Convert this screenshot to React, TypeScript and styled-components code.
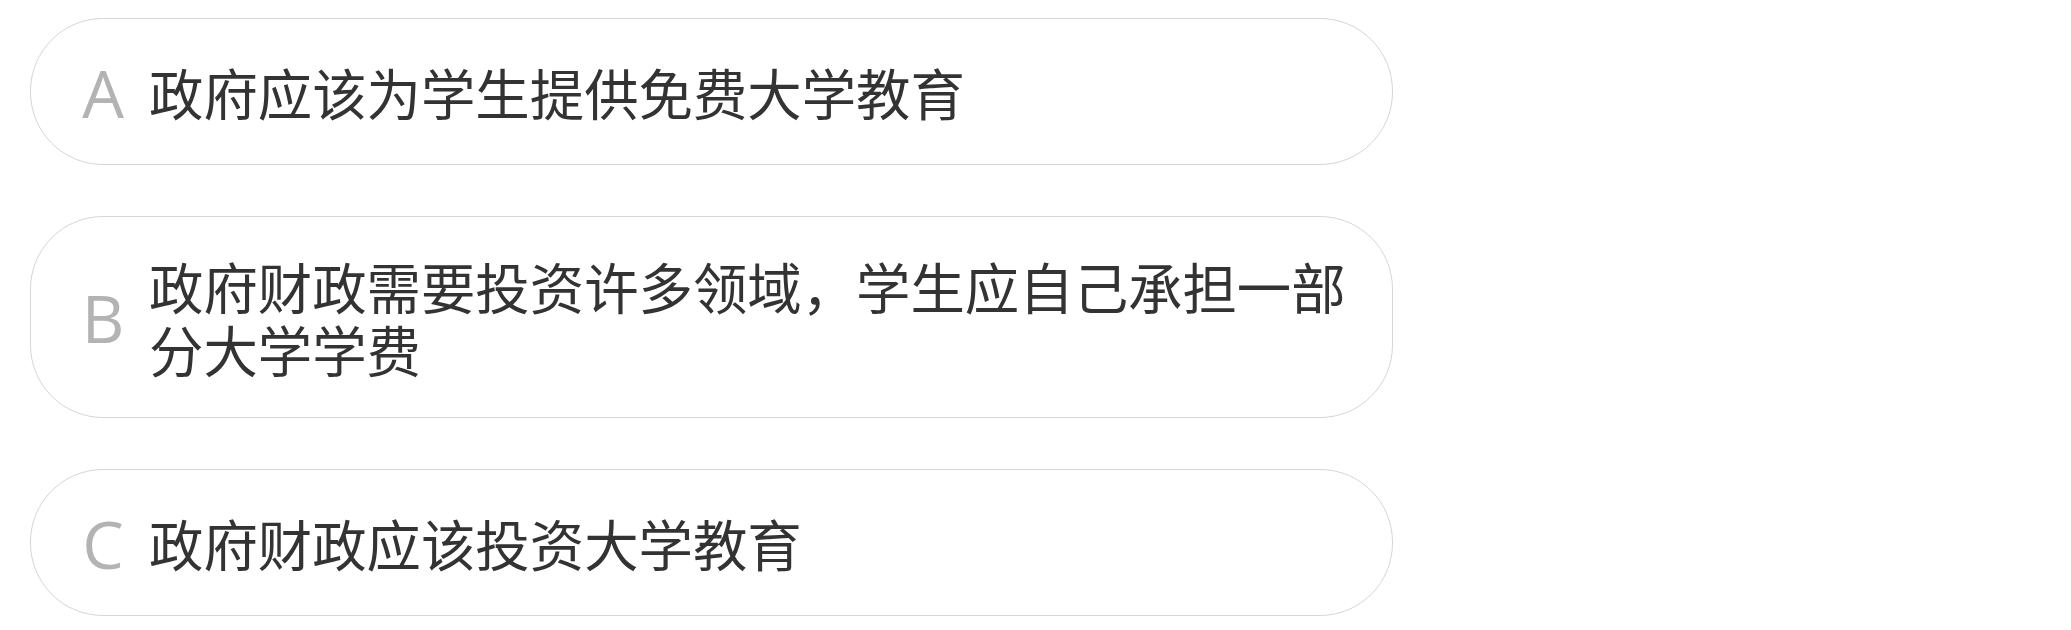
import React from "react";
import styled, { createGlobalStyle } from "styled-components";

const GlobalStyle = createGlobalStyle`
  html, body {
    margin: 0;
    padding: 0;
    background: #ffffff;
  }
  body {
    font-family: "Noto Sans CJK SC", "Noto Sans", sans-serif;
  }
`;

const List = styled.div`
  display: flex;
  flex-direction: column;
  gap: 51px;
  width: 1363px;
  padding: 18px 0 0 30px;
`;

const Option = styled.div`
  display: flex;
  align-items: center;
  box-sizing: border-box;
  min-height: 147px;
  padding: 37px 30px 37px 49px;
  border: 1.5px solid #d6d6d6;
  border-radius: 73px;
  background: #ffffff;
`;

const Letter = styled.span`
  flex: 0 0 46px;
  text-align: center;
  font-family: "Open Sans", "Noto Sans", sans-serif;
  font-size: 66px;
  line-height: 1;
  color: #b3b3b3;
  margin-right: 23px;
`;

const Label = styled.span`
  flex: 1;
  font-family: "Noto Sans CJK SC", "Noto Sans", sans-serif;
  font-size: 54.4px;
  line-height: 63px;
  color: #333333;
`;

const options = [
  { key: "A", text: "政府应该为学生提供免费大学教育" },
  { key: "B", text: "政府财政需要投资许多领域，学生应自己承担一部分大学学费" },
  { key: "C", text: "政府财政应该投资大学教育" },
];

export default function App() {
  return (
    <>
      <GlobalStyle />
      <List>
        {options.map((o) => (
          <Option key={o.key}>
            <Letter>{o.key}</Letter>
            <Label>{o.text}</Label>
          </Option>
        ))}
      </List>
    </>
  );
}
